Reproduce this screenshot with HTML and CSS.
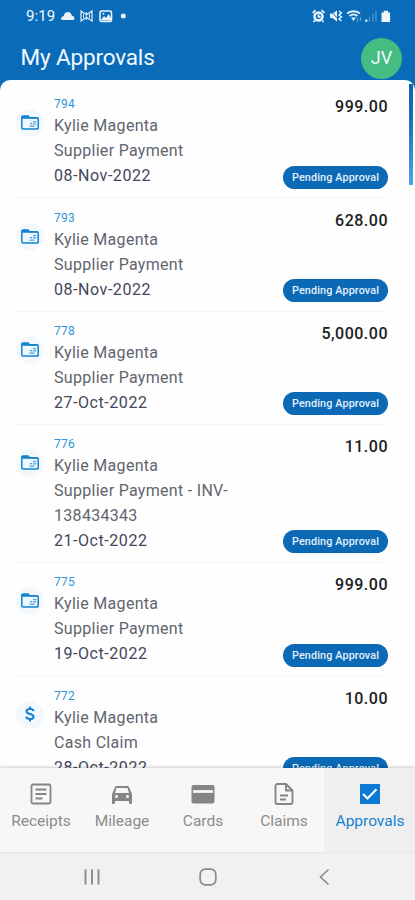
FILE: index.html
```html
<!DOCTYPE html>
<html lang="en">
<head>
<meta charset="utf-8">
<title>My Approvals</title>
<link rel="stylesheet" href="styles.css">
</head>
<body>
<svg class="defs" width="0" height="0">
  <symbol id="folder" viewBox="0 0 18 15">
    <path d="M2 1h5l1.600 1.700H16a1.200 1.200 0 0 1 1.200 1.200v8.900A1.200 1.200 0 0 1 16 14H2a1.200 1.200 0 0 1-1.200-1.200V2.200A1.200 1.200 0 0 1 2 1z" fill="#eef7fe" stroke="#1482cf" stroke-width="1.500"/>
    <path d="M1 1h6.200l1.600 1.700H17V3.800H1z" fill="#1482cf"/>
    <path d="M9 8.700h2.200M8.500 11.200h5M12 6.700h3.200M12 8.900h3.200" stroke="#4aa3e0" stroke-width="1.300"/>
  </symbol>
</svg>
<div class="phone">
  <header>
    <div class="status">
      <span class="time">9:19</span>
      <svg class="s-left" width="66" height="16" viewBox="0 0 66 16" fill="#e9f4fd">
        <path d="M2.500 12Q0 12 0 10.500 0 8.500 2.500 8.300 3.500 4 7 4q3 0 3.800 3.500 2.700.5 2.700 3 0 1.500-2 1.500z"/>
        <path d="M20 3l4.500 3h2L31 3v10l-4.500-3h-2L20 13z" fill="none" stroke="#cfe6f8" stroke-width="1.300"/>
        <path d="M22.500 6v4M25.500 4v8M28.500 6v4" stroke="#cfe6f8"/>
        <rect x="39" y="3" width="11.500" height="10.500" rx="1.500" fill="none" stroke="#e9f4fd" stroke-width="1.600"/>
        <path d="M40 12l3-4 2 2 2.500-4 2.500 4v2.500H40z"/>
        <circle cx="42.500" cy="5.800" r="1"/>
        <circle cx="62.300" cy="8" r="2.500"/>
      </svg>
      <svg class="s-right" width="82" height="16" viewBox="0 0 82 16" fill="#eef7ff">
        <circle cx="7.500" cy="8.500" r="4" fill="none" stroke="#eef7ff" stroke-width="2.500"/>
        <path d="M1.500 5L4.500 2.200M13.500 5L10.500 2.200M3.800 12.500L2.500 14M11.200 12.500l1.300 1.500M7.500 6.200v2.600H9.500" fill="none" stroke="#eef7ff" stroke-width="1.700"/>
        <path d="M19 5.500h2.500L26 2.500v11L21.500 10H19z"/>
        <path d="M19 2.500L30 14" stroke="#0a6cb8" stroke-width="1"/>
        <path d="M28 3l2.500 2L28 7l2.500 2L28 11l2.500 2" fill="none" stroke="#eef7ff" stroke-width="1.400"/>
        <path d="M36 5.500q6.500-4.500 13 0M38.500 8q4-3 8 0" fill="none" stroke="#d8ebfa" stroke-width="2"/>
        <path d="M40 9.500h5l-2.500 3.500z"/>
        <path d="M46.500 10v4M49.500 9v4" stroke="#5b9fd3" stroke-width="1.200"/>
        <path d="M58.500 13.500V9M62 13.500V6M65 13.500V3" stroke="#4c97cf" stroke-width="1.300"/>
        <path d="M54 14v-2.500h2.500V14z" fill="#b5d6ef"/>
        <path d="M70.500 4.500h2.200V2.800h4.400v1.700h2V14h-8.600z"/>
      </svg>
    </div>
    <div class="bar"><h1>My Approvals</h1><div class="avatar">JV</div></div>
  </header>
  <main>
    <div class="scroll"></div>
    <article><div class="ic"><svg width="18" height="15"><use href="#folder"/></svg></div><div class="info"><span class="id">794</span><p>Kylie Magenta</p><p>Supplier Payment</p><p class="date">08-Nov-2022</p></div><div class="side"><b>999.00</b><span class="pill">Pending Approval</span></div></article>
    <article><div class="ic"><svg width="18" height="15"><use href="#folder"/></svg></div><div class="info"><span class="id">793</span><p>Kylie Magenta</p><p>Supplier Payment</p><p class="date">08-Nov-2022</p></div><div class="side"><b>628.00</b><span class="pill">Pending Approval</span></div></article>
    <article><div class="ic"><svg width="18" height="15"><use href="#folder"/></svg></div><div class="info"><span class="id">778</span><p>Kylie Magenta</p><p>Supplier Payment</p><p class="date">27-Oct-2022</p></div><div class="side"><b>5,000.00</b><span class="pill">Pending Approval</span></div></article>
    <article><div class="ic"><svg width="18" height="15"><use href="#folder"/></svg></div><div class="info"><span class="id">776</span><p>Kylie Magenta</p><p>Supplier Payment - INV-<br>138434343</p><p class="date">21-Oct-2022</p></div><div class="side"><b>11.00</b><span class="pill">Pending Approval</span></div></article>
    <article><div class="ic"><svg width="18" height="15"><use href="#folder"/></svg></div><div class="info"><span class="id">775</span><p>Kylie Magenta</p><p>Supplier Payment</p><p class="date">19-Oct-2022</p></div><div class="side"><b>999.00</b><span class="pill">Pending Approval</span></div></article>
    <article><div class="ic"><svg width="12" height="18" viewBox="0 0 12 18" fill="none" stroke="#1482cf" stroke-width="2"><path d="M9.600 6.200Q9.300 4 6 4T2.500 6.200Q2.500 8.200 6 9t3.600 2.900Q9.600 14 6 14T2.200 11.600M6 1.500v3M6 13.500v3"/></svg></div><div class="info"><span class="id">772</span><p>Kylie Magenta</p><p>Cash Claim</p><p class="date">28-Oct-2022</p></div><div class="side"><b>10.00</b><span class="pill">Pending Approval</span></div></article>
  </main>
  <nav class="tabs">
    <div class="tab"><svg width="24" height="24" viewBox="0 0 24 24" fill="none" stroke="#858585" stroke-width="1.800"><rect x="2.500" y="2.500" width="19" height="19" rx="1.500"/><path d="M6.500 7.500h11M6.500 12h11M6.500 16.500h7"/></svg><span>Receipts</span></div>
    <div class="tab"><svg width="24" height="24" viewBox="0 0 24 24" fill="#858585"><path d="M18.920 5.010C18.720 4.420 18.160 4 17.500 4h-11c-.66 0-1.210.42-1.420 1.010L2 12v9c0 .55.450 1 1 1h1c.55 0 1-.45 1-1v-2h14v2c0 .55.450 1 1 1h1c.55 0 1-.45 1-1v-9l-3.080-6.990zM6.500 16c-.83 0-1.500-.67-1.500-1.500S5.670 13 6.500 13s1.500.67 1.500 1.500S7.330 16 6.500 16zm11 0c-.83 0-1.500-.67-1.500-1.500s.67-1.500 1.500-1.500 1.500.67 1.500 1.500-.67 1.500-1.500 1.500zM5 11l1.500-5h11L19 11H5z"/></svg><span>Mileage</span></div>
    <div class="tab"><svg width="24" height="24" viewBox="0 0 24 24"><rect x="0.500" y="3" width="23" height="18.500" rx="2" fill="#858585"/><path d="M2 9.500h20" stroke="#f7f7f7" stroke-width="2.800"/></svg><span>Cards</span></div>
    <div class="tab"><svg width="24" height="24" viewBox="0 0 24 24" fill="none" stroke="#858585" stroke-width="1.900"><path d="M14 2H5.500A2 2 0 0 0 3.500 4v16a2 2 0 0 0 2 2h13a2 2 0 0 0 2-2V8.500zM14 2v6.500h6.500M8 13.500h8M8 17.500h6"/></svg><span>Claims</span></div>
    <div class="tab on"><svg width="24" height="24" viewBox="0 0 24 24"><path d="M2 2h20v20H2z" fill="#0b7ad6"/><path d="M5 12l4.500 4.500 9-9.300" fill="none" stroke="#fff" stroke-width="2.200"/></svg><span>Approvals</span></div>
  </nav>
  <footer>
    <svg width="18" height="18" viewBox="0 0 18 18" stroke="#8b8b8b" stroke-width="1.900"><path d="M2.500 1.500v15M9 1.500v15M15.500 1.500v15"/></svg>
    <svg width="18" height="18" viewBox="0 0 18 18" fill="none" stroke="#8b8b8b" stroke-width="1.700"><rect x="1.200" y="1.200" width="15.600" height="15.600" rx="5"/></svg>
    <svg width="18" height="18" viewBox="0 0 18 18" fill="none" stroke="#8b8b8b" stroke-width="1.700"><path d="M13.500 1.500L5.500 9l8 7.500"/></svg>
  </footer>
</div>
</body>
</html>
```
FILE: styles.css
```css
* { box-sizing: border-box; }
body { margin: 0; font-family: Roboto, "Liberation Sans", sans-serif; background: #0a6cb8; }
h1, p { margin: 0; font-weight: 400; }
svg { display: block; flex: none; }
.defs { position: absolute; }
.phone { width: 415px; height: 900px; display: flex; flex-direction: column; overflow: hidden; }
header { height: 80px; flex: none; color: #f2f9ff; }
.status { height: 32px; display: flex; align-items: center; padding: 0 22px 0 26px; }
.time { font-size: 15px; letter-spacing: .1px; width: 35px; }
.s-right { margin-left: auto; }
.bar { display: flex; justify-content: space-between; padding: 6px 13px 0 20.500px; }
h1 { font-size: 22.500px; line-height: 39px; letter-spacing: -.15px; }
.avatar { width: 41px; height: 41px; border-radius: 50%; background: #45bd82; text-align: center; font-size: 18px; line-height: 40px; }
main { position: relative; height: 688px; flex: none; background: #fefefe; border-radius: 10px 10px 0 0; overflow: hidden; padding: 4.800px 27px 0 16px; }
.scroll { position: absolute; right: 2px; top: 4px; width: 4px; height: 101px; background: linear-gradient(#0a66b2, #1671bd 35%, #4aa5e9); }
article { display: flex; height: 113.400px; border-bottom: 1px solid #f3f4f5; padding-top: 10.400px; }
article:nth-of-type(4) { height: 138px; }
.ic { width: 28px; height: 28px; margin: 14px 10px 0 0; border-radius: 50%; background: #f3f8fd; display: flex; align-items: center; justify-content: center; padding-bottom: 1px; }
.info { flex: 1; white-space: nowrap; color: #62646f; font-size: 16px; line-height: 25px; letter-spacing: .3px; }
.id { display: block; font-size: 12px; line-height: 18px; color: #2f95d8; letter-spacing: .3px; }
.date { color: #44465a; letter-spacing: .55px; }
.side { display: flex; flex-direction: column; justify-content: space-between; align-items: flex-end; padding-bottom: 8.500px; }
b { font-size: 16px; line-height: 24px; font-weight: 500; color: #1c1c20; letter-spacing: .5px; }
.pill { height: 23px; width: 105px; border-radius: 12px; background: #0b69b5; color: #e4f1fc; font-size: 10.800px; font-weight: 500; line-height: 24px; text-align: center; letter-spacing: .13px; }
.tabs { height: 84px; flex: none; display: grid; grid-template-columns: repeat(4, 81px) 91px; background: #f7f7f7; box-shadow: 0 -1px 3px #0003; position: relative; }
.tab { display: flex; flex-direction: column; align-items: center; padding: 14px 0 0 1px; font-size: 15.500px; line-height: 20px; gap: 5px; color: #8b8b8b; letter-spacing: 0; }
.on { background: #efefef; color: #1482d4; }
footer { height: 48px; flex: none; background: #f1f1f1; display: flex; justify-content: space-between; align-items: center; padding: 2px 82px 0 83px; }
```
